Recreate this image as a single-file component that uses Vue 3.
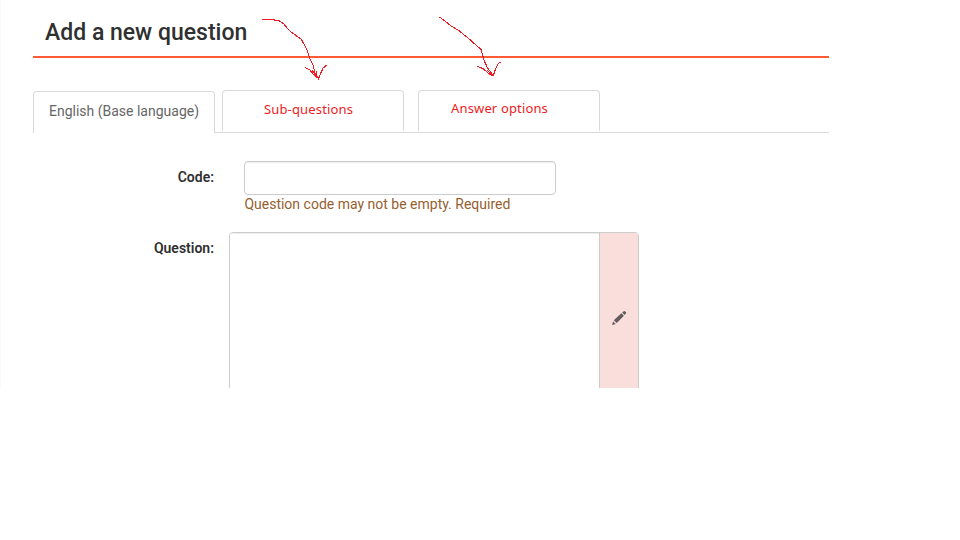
<template>
  <div class="page">
    <h1 class="page-title">Add a new question</h1>

    <ul class="tabs">
      <li
        v-for="tab in tabs"
        :key="tab.id"
        class="tab"
        :class="[tab.id, { active: activeTab === tab.id }]"
        @click="activeTab = tab.id"
      >
        <span class="tab-label">{{ tab.label }}</span>
      </li>
    </ul>

    <form class="question-form" @submit.prevent>
      <div class="form-row">
        <label for="code">Code:</label>
        <div class="code-field">
          <input id="code" v-model="question.code" type="text" class="code-input" />
          <p class="help-text">Question code may not be empty. Required</p>
        </div>
      </div>

      <div class="form-row question-row">
        <label for="question">Question:</label>
        <div class="editor-group">
          <textarea id="question" v-model="question.text" class="editor"></textarea>
          <button type="button" class="editor-addon" aria-label="Open editor">
            <svg width="16" height="16" viewBox="0 0 16 16">
              <path d="M1 15 L2.1 11.4 L4.7 13.9 Z M2.8 10.2 L10.4 3.2 L12.9 5.7 L5.8 13 Z M11.2 2.6 L12.8 1.2 Q13.5 .8 14.1 1.4 L14.9 2.1 Q15.4 2.7 14.9 3.4 L13.5 4.9 Z" fill="#625b5b" />
            </svg>
          </button>
        </div>
      </div>
    </form>

    <!-- Hand-drawn pointers over the two new tabs -->
    <svg class="pointers" width="960" height="140" viewBox="0 0 960 140">
      <path v-for="(d, i) in pointers" :key="i" :d="d" />
    </svg>
  </div>
</template>

<script setup>
import { reactive, ref } from 'vue';

const tabs = [
  { id: 'language', label: 'English (Base language)' },
  { id: 'subquestions', label: 'Sub-questions' },
  { id: 'answers', label: 'Answer options' },
];

const activeTab = ref('language');

const question = reactive({
  code: '',
  text: '',
});

const pointers = [
  'M262 19.5 H270 L279 20.5 L284 24 L287 28 L291 32 L301 39 L304 44 L307 50 L310 59 L313 65 L315 73 L318.5 78.5 L323 68 L327.5 64.5',
  'M305 67.5 L310 70 L314 75 L318.5 78.5 M312 70 L316 76 L316.5 71',
  'M439.5 17 L445 21 L451 26 L458 30 L468 38 L481 49.5 L484 60 L487 67 L492 74 L493 76 L496 68 L498 64 L500.5 62',
  'M477.5 66.5 L483 68.5 L488 73 L493 76 L487 70',
];
</script>

<style>
body {
  margin: 0;
  background: #fff;
}
</style>

<style scoped>
.page {
  position: relative;
  box-sizing: border-box;
  width: 960px;
  height: 388px;
  padding: 10px 0 0 32px;
  border-left: 1px solid #fafafa;
  overflow: hidden;
  font-family: Roboto, 'Liberation Sans', sans-serif;
  font-size: 14px;
  color: #333;
}

.page-title {
  box-sizing: border-box;
  width: 796px;
  height: 48px;
  margin: 0;
  padding-left: 12px;
  border-bottom: 2px solid #ff5a36;
  font-size: 23px;
  font-weight: 500;
  line-height: 45px;
  color: #2f3030;
}

.tabs {
  display: flex;
  box-sizing: border-box;
  width: 796px;
  height: 43px;
  margin: 32px 0 0;
  padding: 0;
  list-style: none;
  border-bottom: 1px solid #d9d9d9;
}

.tab {
  box-sizing: border-box;
  width: 182px;
  height: 41px;
  border: 1px solid #d9d9d9;
  border-bottom: none;
  border-radius: 4px 4px 0 0;
  text-align: center;
  cursor: pointer;
}

.tab.active {
  height: 42px;
  margin-top: 1px;
  background: #fff;
  color: #666;
  line-height: 39px;
}

.subquestions {
  margin-left: 7px;
}

.answers {
  margin-left: 14px;
}

.subquestions,
.answers {
  font-family: 'Noto Sans', sans-serif;
  font-size: 13px;
  letter-spacing: 0.15px;
  color: #ed1c24;
  text-align: left;
}

.subquestions {
  padding-left: 41px;
  line-height: 37px;
}

.answers {
  padding-left: 32px;
  line-height: 35px;
}

.question-form {
  padding-top: 28px;
}

.form-row {
  display: flex;
}

label {
  width: 181px;
  font-weight: 600;
  line-height: 33px;
  text-align: right;
  color: #2f3030;
}

.code-field {
  height: 71px;
  margin-left: 30px;
}

.code-input {
  display: block;
  box-sizing: border-box;
  width: 312px;
  height: 34px;
  padding: 6px 12px;
  border: 1px solid #ccc;
  border-radius: 4px;
  box-shadow: inset 0 1px 1px rgba(0, 0, 0, 0.075);
  font: inherit;
}

.help-text {
  margin: 0;
  padding-left: 0.4px;
  line-height: 18px;
  color: #96602f;
}

.editor-group {
  display: flex;
  box-sizing: border-box;
  width: 410px;
  height: 172px;
  margin-left: 15px;
  border: 1px solid #ccc;
  border-radius: 4px;
  overflow: hidden;
}

.editor {
  box-sizing: border-box;
  width: 369px;
  height: 170px;
  padding: 6px 12px;
  border: none;
  box-shadow: inset 0 1px 1px rgba(0, 0, 0, 0.075);
  font: inherit;
  resize: none;
}

.editor-addon {
  display: flex;
  flex: 1;
  align-items: center;
  justify-content: center;
  padding: 0;
  border: none;
  border-left: 1px solid #ccc;
  background: #f9dedb;
  cursor: pointer;
}

.pointers {
  position: absolute;
  top: 0;
  left: -1px;
  pointer-events: none;
}

.pointers path {
  fill: none;
  stroke: #ed1c24;
  stroke-width: 1.1;
  shape-rendering: crispEdges;
}
</style>
